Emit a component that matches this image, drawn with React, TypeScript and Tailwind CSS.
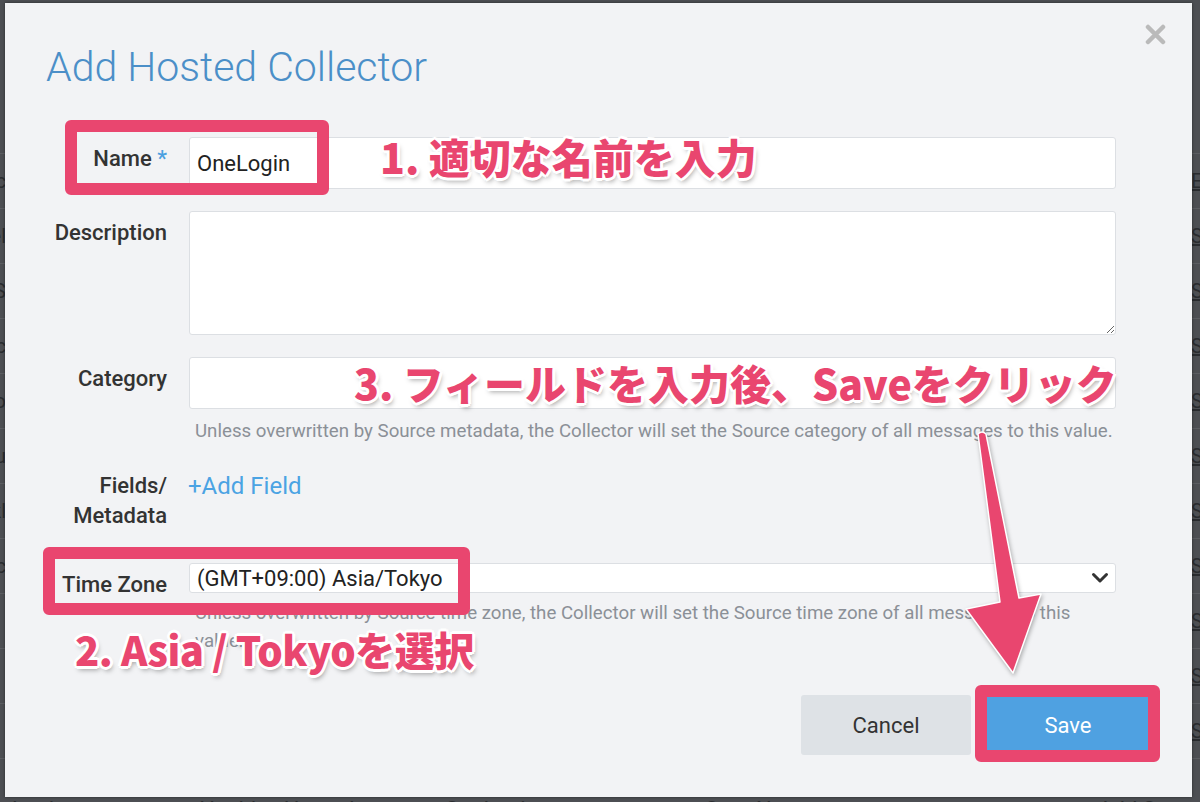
import React from "react";

const PINK = "#e9466f";

const rows = [
  { left: "Sc", right: "Edit" },
  { left: "Tel", right: "Source" },
  { left: "AWS", right: "Source" },
  { left: "Sec", right: "Source" },
  { left: "Jbo", right: "Source" },
  { left: "Azu", right: "Source" },
  { left: "Okl", right: "Source" },
  { left: "Dc", right: "Source" },
  { left: "", right: "Source" },
  { left: "", right: "Source" },
  { left: "", right: "Source" },
];

function Backdrop() {
  return (
    <div className="absolute inset-0 flex flex-col text-[20px] text-[#2a2c2f]">
      <div className="h-[154px] shrink-0 border-b border-[#5c5e62]" />
      {rows.map((r, i) => (
        <div key={i} className="h-[55px] shrink-0 flex justify-between border-b border-[#5c5e62] pt-[12px]">
          <div className="w-[6px] flex justify-end overflow-hidden whitespace-nowrap">{r.left}</div>
          <div className="w-[9px] overflow-hidden whitespace-nowrap underline">{r.right}</div>
        </div>
      ))}
      <div className="flex items-center whitespace-nowrap text-[22px] pt-[34px]">
        <span className="ml-[12px]">Login</span>
        <span className="ml-[123px] w-[20px] h-[20px] bg-[#3b5a2a]" />
        <span className="ml-[10px]">Healthy</span>
        <span className="ml-[10px]">Hosted</span>
        <span className="ml-[90px]">OneLogin</span>
        <span className="ml-[168px]">3</span>
        <span className="ml-[38px]">None</span>
        <span className="ml-[290px] underline">Add Source</span>
      </div>
    </div>
  );
}

const LABEL = "w-[162px] shrink-0 text-right text-[22px] font-medium leading-[30px] pt-[7px] text-[#333333]";
const FIELD = "bg-white border border-[#dcdfe3] rounded-[3px]";
const HELP = "text-[18.7px] leading-[28px] text-[#8b9097] pl-[6px]";

function Modal() {
  return (
    <div className="w-[1187px] h-[794px] bg-[#f2f3f5] shadow-[0_0_3px_rgba(0,0,0,0.45)] flex flex-col">
      <div className="flex items-start justify-between pl-[41px] pr-[26px] pt-[19px]">
        <h1 className="mt-[21px] text-[41px] leading-[48px] font-light text-[#4b8fc8]">Add Hosted Collector</h1>
        <svg width="21" height="21" viewBox="0 0 21 21" className="mt-[2px]">
          <path d="M3 3 L18 18 M18 3 L3 18" stroke="#bababa" strokeWidth="4.5" strokeLinecap="round" />
        </svg>
      </div>

      <div className="flex flex-col pr-[76px] mt-[46px]">
        <div className="flex gap-[22px]">
          <label className={LABEL}>
            Name <span className="text-[#4ba0e0]">*</span>
          </label>
          <div className={`flex-1 h-[52px] flex items-center px-[7px] text-[22px] text-[#222] ${FIELD}`}>OneLogin</div>
        </div>

        <div className="flex gap-[22px] mt-[22px]">
          <label className={LABEL}>Description</label>
          <textarea className={`flex-1 h-[124px] outline-none ${FIELD}`} />
        </div>

        <div className="flex gap-[22px] mt-[22px]">
          <label className={LABEL}>Category</label>
          <div className="flex-1 flex flex-col">
            <div className={`h-[52px] ${FIELD}`} />
            <p className={`${HELP} mt-[8px]`}>
              Unless overwritten by Source metadata, the Collector will set the Source category of all messages to this value.
            </p>
          </div>
        </div>

        <div className="flex gap-[22px] mt-[19px]">
          <label className={LABEL}>
            Fields/
            <br />
            Metadata
          </label>
          <div className="flex-1 pt-[7px] text-[24px] leading-[30px] text-[#4ba3e3] -ml-[1px]">+Add Field</div>
        </div>

        <div className="flex gap-[22px] mt-[32px]">
          <label className={LABEL}>Time Zone</label>
          <div className="flex-1 flex flex-col">
            <div className={`h-[30px] flex items-center justify-between pl-[7px] pr-[6px] text-[22px] text-[#222] ${FIELD}`}>
              <span>(GMT+09:00) Asia/Tokyo</span>
              <svg width="18" height="12" viewBox="0 0 18 12">
                <path d="M2.5 2.5 L9 9 L15.5 2.5" fill="none" stroke="#333" strokeWidth="3" strokeLinecap="round" strokeLinejoin="round" />
              </svg>
            </div>
            <p className={`${HELP} mt-[6px]`}>
              Unless overwritten by Source time zone, the Collector will set the Source time zone of all messages to this value.
            </p>
          </div>
        </div>
      </div>

      <div className="flex justify-end gap-[12px] pr-[39px] mt-[40px]">
        <button className="w-[170px] h-[60px] rounded-[3px] bg-[#dee2e6] text-[22px] text-[#333]">Cancel</button>
        <button className="w-[170px] h-[60px] rounded-[3px] bg-[#4fa1e1] text-[22px] text-white">Save</button>
      </div>
    </div>
  );
}

const NOTE =
  "absolute whitespace-nowrap leading-[40px] font-black text-[#e9466f] font-['Noto_Sans_CJK_JP',sans-serif] [text-shadow:3px_0_0_#fff,-3px_0_0_#fff,0_3px_0_#fff,0_-3px_0_#fff,2px_2px_0_#fff,-2px_-2px_0_#fff,2px_-2px_0_#fff,-2px_2px_0_#fff,2px_4px_5px_rgba(0,0,0,0.35)]";

function Annotations() {
  return (
    <>
      <div className="absolute left-[65px] top-[120px] w-[264px] h-[75px] border-[12px] border-[#e9466f] rounded-[6px]" />
      <div className="absolute left-[43px] top-[547px] w-[427px] h-[68px] border-[12px] border-[#e9466f] rounded-[6px]" />
      <div className="absolute left-[975px] top-[685px] w-[185px] h-[77px] border-[12px] border-[#e9466f] rounded-[6px]" />

      <div className={`${NOTE} text-[41px] left-[380px] top-[136px]`}>1. 適切な名前を入力</div>
      <div className={`${NOTE} text-[41px] left-[354px] top-[362px]`}>3. フィールドを入力後、Saveをクリック</div>
      <div className={`${NOTE} text-[40px] tracking-[-0.5px] left-[75px] top-[629px]`}>2. Asia / Tokyoを選択</div>

      <svg className="absolute inset-0 pointer-events-none drop-shadow-[1px_2px_2px_rgba(0,0,0,0.3)]" width="1200" height="802" viewBox="0 0 1200 802">
        <path
          d="M978 434 Q982 430 986 434 L1019 598 L1041 594 L1013 673 L966 609 L1000 602 Z"
          fill={PINK}
          stroke="#ffffff"
          strokeWidth="1.5"
          strokeLinejoin="round"
        />
      </svg>
    </>
  );
}

export default function App() {
  return (
    <div className="relative w-[1200px] h-[802px] overflow-hidden bg-[#4d4f53] font-['Roboto',sans-serif]">
      <Backdrop />
      <div className="relative pt-[3px] pl-[5px]">
        <Modal />
      </div>
      <Annotations />
    </div>
  );
}
